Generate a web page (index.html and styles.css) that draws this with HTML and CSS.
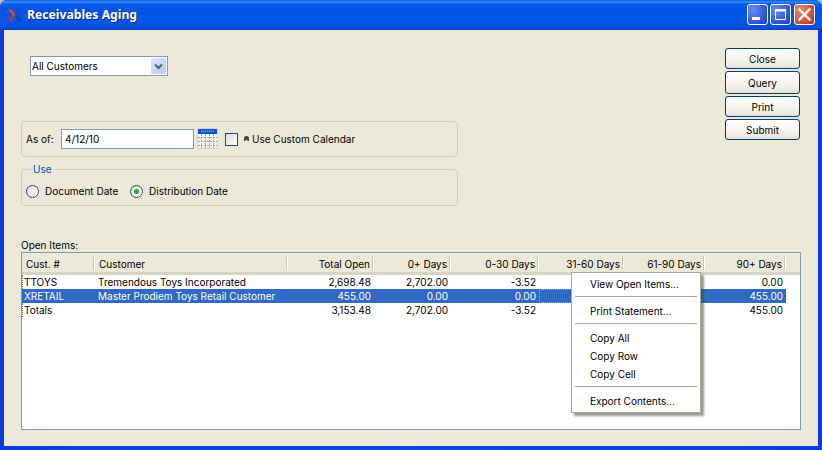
FILE: index.html
```html
<!DOCTYPE html>
<html lang="en">
<head>
<meta charset="utf-8">
<title>Receivables Aging</title>
<link rel="stylesheet" href="styles.css">
</head>
<body>
<div class="window">
  <header class="titlebar">
    <svg class="app-icon" width="14" height="11" viewBox="0 0 14 11"><path d="M0 0h4l3.500 4.500-1.500 2L2.500 2.500z" fill="#e0481c"/><path d="M6 6.500L3 11H0l4.500-6z" fill="#c8381c"/><path d="M9 0h4L8.500 5.500 7 4.500z" fill="#2048b0"/><path d="M7.500 6l1-1L14 11h-4z" fill="#1a3ca0"/></svg>
    <span class="title">Receivables Aging</span>
    <div class="controls">
      <span class="ctl ctl-blue"><svg width="21" height="21" viewBox="0 0 21 21"><rect x="5" y="13" width="8" height="3" fill="#fff"/></svg></span>
      <span class="ctl ctl-blue"><svg width="21" height="21" viewBox="0 0 21 21"><path d="M5.500 5.500h10v10h-10z" fill="none" stroke="#fff" stroke-width="1"/><rect x="5" y="5" width="11" height="2.500" fill="#fff"/></svg></span>
      <span class="ctl ctl-red"><svg width="21" height="21" viewBox="0 0 21 21"><path d="M5.500 5.500l10 10M15.500 5.500l-10 10" stroke="#fff" stroke-width="2.400" stroke-linecap="square"/></svg></span>
    </div>
  </header>
  <main class="client">
    <div class="top">
      <div class="params">
        <div class="combo"><span class="combo-text">All Customers</span><span class="combo-btn"><svg width="9" height="7" viewBox="0 0 9 7"><path d="M1 1.500l3.500 3.500L8 1.500" fill="none" stroke="#4d6185" stroke-width="2"/></svg></span></div>
        <div class="group asof">
          <span class="asof-label">As of:</span>
          <span class="date-input">4/12/10</span>
          <svg class="cal" width="21" height="21" viewBox="0 0 21 21"><rect width="21" height="21" fill="#d8d6ca"/><rect x="1" y="1" width="19" height="19" fill="#f4f4f0"/><rect x="1" y="1" width="19" height="5" fill="#1c50c8"/><rect x="4" y="2.500" width="13" height="1.500" fill="#2a9ad8"/><path d="M1 9.500h19M1 13.500h19M1 17.500h19M4.500 6v14M8.500 6v14M12.500 6v14M16.500 6v14" stroke="#a8a8a0" stroke-width="1" stroke-dasharray="2 1"/></svg>
          <span class="check"></span>
          <svg class="mark" width="5" height="5" viewBox="0 0 5 5"><path d="M0 5V2.500Q0 0 2.500 0T5 2.500V5H3.800L2.500 3.500 1.200 5z" fill="#444"/></svg>
          <span>Use Custom Calendar</span>
        </div>
        <fieldset class="group use">
          <legend>Use</legend>
          <label class="radio-row first"><span class="radio"></span>Document Date</label>
          <label class="radio-row"><span class="radio on"></span>Distribution Date</label>
        </fieldset>
      </div>
      <div class="actions">
        <button class="btn">Close</button>
        <button class="btn tall">Query</button>
        <button class="btn">Print</button>
        <button class="btn">Submit</button>
      </div>
    </div>
    <div class="list-label">Open Items:</div>
    <div class="list">
      <table class="grid">
        <colgroup><col class="c1"><col class="c2"><col class="c3"><col class="c4"><col class="c5"><col class="c6"><col class="c7"><col class="c8"><col class="c9"></colgroup>
        <thead>
          <tr><th class="l">Cust. #</th><th class="l">Customer</th><th>Total Open</th><th>0+ Days</th><th>0-30 Days</th><th>31-60 Days</th><th>61-90 Days</th><th>90+ Days</th><th class="filler"></th></tr>
        </thead>
        <tbody>
          <tr><td class="l">TTOYS</td><td class="l">Tremendous Toys Incorporated</td><td>2,698.48</td><td>2,702.00</td><td>-3.52</td><td></td><td></td><td>0.00</td><td class="filler"></td></tr>
          <tr class="sel"><td class="l">XRETAIL</td><td class="l">Master Prodiem Toys Retail Customer</td><td>455.00</td><td>0.00</td><td>0.00</td><td class="focus"></td><td></td><td>455.00</td><td class="filler"></td></tr>
          <tr><td class="l">Totals</td><td class="l"></td><td>3,153.48</td><td>2,702.00</td><td>-3.52</td><td></td><td></td><td>455.00</td><td class="filler"></td></tr>
        </tbody>
      </table>
      <ul class="menu">
        <li>View Open Items...</li>
        <li class="sep"></li>
        <li>Print Statement...</li>
        <li class="sep"></li>
        <li>Copy All</li>
        <li>Copy Row</li>
        <li>Copy Cell</li>
        <li class="sep"></li>
        <li>Export Contents...</li>
      </ul>
    </div>
  </main>
</div>
</body>
</html>
```
FILE: styles.css
```css
* { box-sizing: border-box; }
html, body { margin: 0; padding: 0; background: #c5c2b0; }
body { font: 10px/14px Inter, sans-serif; color: #000; }
.window {
  width: 822px; height: 450px; display: flex; flex-direction: column;
  background: linear-gradient(90deg, #0a3ce0, #0848e8 50%, #0a3ce0); border-radius: 7px 7px 0 0; overflow: hidden;
}
.titlebar {
  height: 30px; flex: none; display: flex; align-items: center; padding: 0 7px 0 8px;
  background: linear-gradient(#0a5ae0 0, #2f8cfb 2px, #0a5cf0 4px, #0154e4 10px, #0157ea 20px, #0350dc 27px, #0340c0 30px);
}
.app-icon { flex: none; margin-right: 5px; }
.title { color: #fff; font: bold 12.2px/16px "Noto Sans", sans-serif; text-shadow: 1px 1px 0 #0a2a90; flex: 1; }
.controls { display: flex; gap: 2px; margin-top: -2px; }
.ctl { width: 21px; height: 21px; border: 1px solid #fff; border-radius: 3px; display: block; }
.ctl svg { display: block; margin: -1px; }
.ctl-blue { background: radial-gradient(circle at 25% 25%, #6a8cf0, #2a52d8 70%, #1c3fc0); }
.ctl-red { background: radial-gradient(circle at 25% 25%, #e88a6c, #d4492a 70%, #b83216); margin-left: 1px; }
.client {
  flex: 1; margin: 0 4px 4px; background: #ece9d8; padding: 0 17px 16px;
  display: flex; flex-direction: column;
}
.top { display: flex; justify-content: space-between; align-items: flex-start; }
.params { width: 437px; padding-top: 26px; }
.combo {
  width: 138px; height: 20px; margin-left: 9px; background: #fff; border: 1px solid #7f9db9;
  display: flex; align-items: center; justify-content: space-between; padding: 1px;
}
.combo-btn {
  width: 15px; height: 16px; background: linear-gradient(135deg, #dfe7fb, #b5c7f3);
  border-radius: 2px; display: flex; align-items: center; justify-content: center;
}
.group { border: 1px solid #d0cdb8; border-radius: 4px; margin: 0; }
.asof {
  height: 36px; margin-top: 45px; display: flex; align-items: center; padding-left: 4px;
}
.asof-label { width: 35px; }
.date-input {
  width: 133px; height: 20px; background: #fff; border: 1px solid #7f9db9; padding: 2px 3px;
}
.cal { margin-left: 3px; margin-top: -1px; flex: none; }
.check {
  width: 13px; height: 13px; margin-left: 7px; border: 1px solid #1c5180;
  background: linear-gradient(135deg, #dcdcd7, #fff);
}
.mark { margin: -2px 3px 0 6px; flex: none; }
.use {
  height: 44px; margin-top: 5px; padding: 1px 0 0 4px; display: flex; align-items: center; min-inline-size: 0;
}
.use legend { color: #0046d5; padding: 0 2px; margin-left: 5px; line-height: 14px; }
.radio-row { display: inline-flex; align-items: center; }
.radio-row.first { width: 104px; }
.radio {
  width: 13px; height: 13px; margin-right: 6px; border: 1px solid #1c5180; border-radius: 50%;
  background: linear-gradient(135deg, #dcdcd7, #fff); position: relative;
}
.radio.on::after {
  content: ""; position: absolute; left: 3px; top: 3px; width: 5px; height: 5px; border-radius: 50%; background: #2fa32f;
}
.actions { display: flex; flex-direction: column; width: 75px; margin-top: 18px; margin-right: 1px; gap: 2px; }
.btn {
  width: 75px; height: 21px; padding: 0; font: inherit; color: #000; border: 1px solid #003c74; border-radius: 3px;
  background: linear-gradient(#fff, #f4f4ee 60%, #e6e3d6);
}
.btn.tall { height: 23px; }
.list-label { margin-top: 33px; height: 13px; line-height: 13px; }
.list { position: relative; height: 178px; background: #fff; border: 1px solid #7f9db9; }
.grid { width: 778px; border-collapse: separate; border-spacing: 0; table-layout: fixed; }
.c1 { width: 73px; } .c2 { width: 193px; } .c3 { width: 86px; } .c4 { width: 77px; }
.c5 { width: 88px; } .c6 { width: 85px; } .c7 { width: 81px; } .c8 { width: 81px; } .c9 { width: 14px; }
.grid th {
  height: 22px; font-weight: normal; text-align: right; padding: 2px 4px 0 4px; background: #ece9d8;
  border-bottom: 3px solid #d8d4c2; position: relative;
}
.grid th::after {
  content: ""; position: absolute; right: 0; top: 3px; bottom: 2px; width: 2px; background: linear-gradient(90deg, #cbc7b8 50%, #fff 50%);
}
.grid th.filler::after { display: none; }
.grid td { height: 14px; padding: 0 3px 0 3px; text-align: right; white-space: nowrap; overflow: hidden; }
.grid .l { text-align: left; }
.grid td:first-child { padding-left: 1px; border-left: 1px dotted #777; }
.grid tr.sel td:first-child { border-left-color: #316ac5; }
.grid tr.sel td { background: #316ac5; color: #fff; }
.grid tr.sel td.filler { background: none; }
.grid tr.sel td.focus { outline: 1px dotted #e8a040; outline-offset: -1px; }
.menu {
  position: absolute; left: 549px; top: 19px; width: 130px; height: 141px; margin: 0; padding: 2px; list-style: none;
  background: #fff; border: 1px solid #aca899; box-shadow: 3px 3px 2px rgba(70,70,60,.55);
}
.menu li { height: 18px; line-height: 18px; padding-left: 16px; white-space: nowrap; }
.menu li.sep { height: 9px; padding: 0; margin: 0 1px; position: relative; }
.menu li.sep::after { content: ""; position: absolute; left: 0; right: 0; top: 3px; height: 1px; background: #aca899; }
```
